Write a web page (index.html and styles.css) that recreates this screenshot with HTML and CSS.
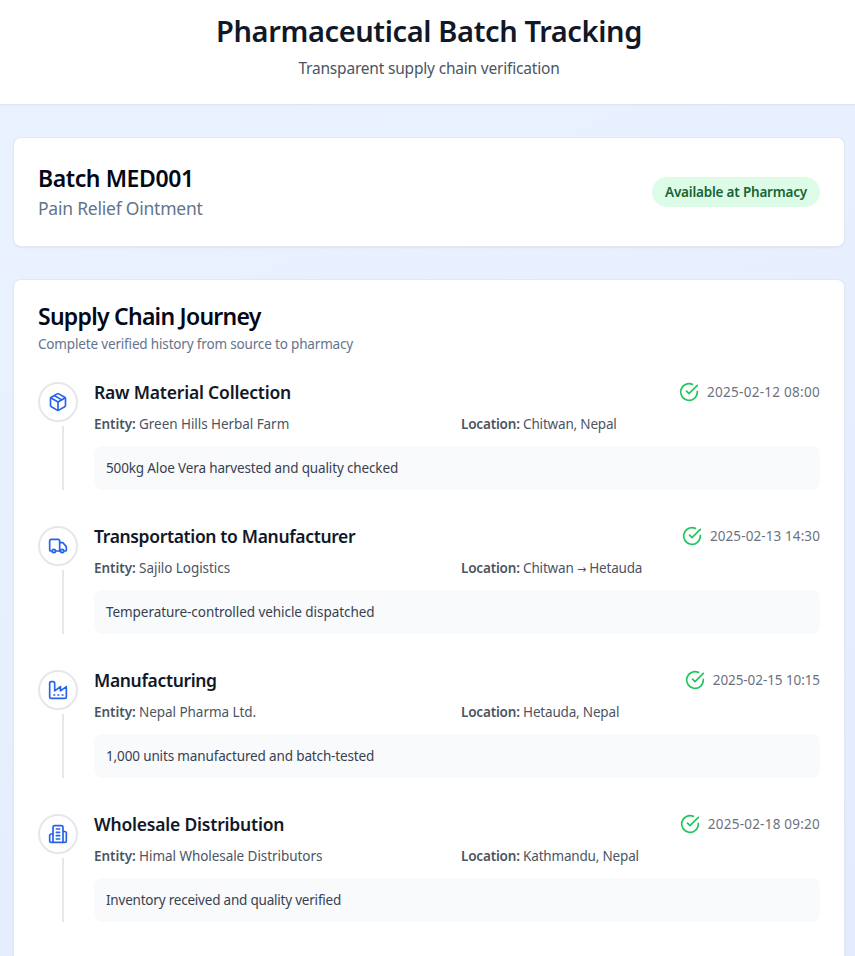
FILE: index.html
```html
<!DOCTYPE html>
<html lang="en">
<head>
<meta charset="utf-8">
<title>Pharmaceutical Batch Tracking</title>
<link rel="stylesheet" href="styles.css">
</head>
<body>
<svg class="sprite" aria-hidden="true">
  <symbol id="package" viewBox="0 0 24 24"><path d="m7.5 4.27 9 5.15"/><path d="M21 8a2 2 0 0 0-1-1.73l-7-4a2 2 0 0 0-2 0l-7 4A2 2 0 0 0 3 8v8a2 2 0 0 0 1 1.73l7 4a2 2 0 0 0 2 0l7-4A2 2 0 0 0 21 16Z"/><path d="m3.3 7 8.7 5 8.7-5"/><path d="M12 22V12"/></symbol>
  <symbol id="truck" viewBox="0 0 24 24"><path d="M14 18V6a2 2 0 0 0-2-2H4a2 2 0 0 0-2 2v11a1 1 0 0 0 1 1h2"/><path d="M15 18H9"/><path d="M19 18h2a1 1 0 0 0 1-1v-3.65a1 1 0 0 0-.22-.624l-3.48-4.35A1 1 0 0 0 17.52 8H14"/><circle cx="17" cy="18" r="2"/><circle cx="7" cy="18" r="2"/></symbol>
  <symbol id="factory" viewBox="0 0 24 24"><path d="M2 20a2 2 0 0 0 2 2h16a2 2 0 0 0 2-2V8l-7 5V8l-7 5V4a2 2 0 0 0-2-2H4a2 2 0 0 0-2 2Z"/><path d="M17 18h1"/><path d="M12 18h1"/><path d="M7 18h1"/></symbol>
  <symbol id="building" viewBox="0 0 24 24"><path d="M6 22V4a2 2 0 0 1 2-2h8a2 2 0 0 1 2 2v18Z"/><path d="M6 12H4a2 2 0 0 0-2 2v6a2 2 0 0 0 2 2h2"/><path d="M18 9h2a2 2 0 0 1 2 2v9a2 2 0 0 1-2 2h-2"/><path d="M10 6h4"/><path d="M10 10h4"/><path d="M10 14h4"/><path d="M10 18h4"/></symbol>
  <symbol id="check" viewBox="0 0 24 24"><path d="M22 11.08V12a10 10 0 1 1-5.93-9.14"/><path d="m9 11 3 3L22 4"/></symbol>
</svg>
<header class="header">
  <h1>Pharmaceutical Batch Tracking</h1>
  <p>Transparent supply chain verification</p>
</header>
<main class="main">
  <section class="card batch">
    <div>
      <h2 class="batch-title">Batch MED001</h2>
      <p class="batch-name">Pain Relief Ointment</p>
    </div>
    <span class="status">Available at Pharmacy</span>
  </section>
  <section class="card journey">
    <h2 class="journey-title">Supply Chain Journey</h2>
    <p class="journey-note">Complete verified history from source to pharmacy</p>
    <div class="steps">
      <article class="step">
        <div class="rail"><div class="dot"><svg><use href="#package"/></svg></div><div class="line"></div></div>
        <div class="body">
          <div class="top"><h3>Raw Material Collection</h3><div class="when"><svg><use href="#check"/></svg><time>2025-02-12 08:00</time></div></div>
          <div class="meta"><p><b>Entity:</b> Green Hills Herbal Farm</p><p><b>Location:</b> Chitwan, Nepal</p></div>
          <p class="detail">500kg Aloe Vera harvested and quality checked</p>
        </div>
      </article>
      <article class="step">
        <div class="rail"><div class="dot"><svg><use href="#truck"/></svg></div><div class="line"></div></div>
        <div class="body">
          <div class="top"><h3 class="long">Transportation to Manufacturer</h3><div class="when"><svg><use href="#check"/></svg><time class="snug">2025-02-13 14:30</time></div></div>
          <div class="meta"><p><b>Entity:</b> Sajilo Logistics</p><p><b>Location:</b> Chitwan <span class="arrow">→</span> Hetauda</p></div>
          <p class="detail wide">Temperature-controlled vehicle dispatched</p>
        </div>
      </article>
      <article class="step">
        <div class="rail"><div class="dot"><svg><use href="#factory"/></svg></div><div class="line"></div></div>
        <div class="body">
          <div class="top"><h3 class="long">Manufacturing</h3><div class="when"><svg><use href="#check"/></svg><time class="tight">2025-02-15 10:15</time></div></div>
          <div class="meta"><p><b>Entity:</b> Nepal Pharma Ltd.</p><p><b>Location:</b> Hetauda, Nepal</p></div>
          <p class="detail">1,000 units manufactured and batch-tested</p>
        </div>
      </article>
      <article class="step">
        <div class="rail"><div class="dot"><svg><use href="#building"/></svg></div><div class="line"></div></div>
        <div class="body">
          <div class="top"><h3>Wholesale Distribution</h3><div class="when"><svg><use href="#check"/></svg><time class="close">2025-02-18 09:20</time></div></div>
          <div class="meta"><p><b>Entity:</b> Himal Wholesale Distributors</p><p><b>Location:</b> Kathmandu, Nepal</p></div>
          <p class="detail narrow">Inventory received and quality verified</p>
        </div>
      </article>
    </div>
  </section>
</main>
</body>
</html>
```
FILE: styles.css
```css
* { box-sizing: border-box; margin: 0; }
html { height: 100%; overflow: hidden; }
body {
  height: 956px;
  overflow: hidden;
  font: 13.5px/20px "Noto Sans", sans-serif;
  color: #020817;
  background: linear-gradient(155deg, #ebf2ff, #e4ebfe);
}
svg { fill: none; stroke: currentColor; stroke-width: 2; stroke-linecap: round; stroke-linejoin: round; width: 20px; height: 20px; flex: none; display: block; }
.sprite { display: none; }
.header {
  height: 104px;
  padding: 13px 10px 0 13px;
  text-align: center;
  background: #fff;
  box-shadow: 0 1px 2px rgba(0, 0, 0, .07);
}
h1 { font-size: 29px; line-height: 36px; font-weight: 600; letter-spacing: -.38px; color: #111827; white-space: nowrap; }
.header p { margin-top: 7px; font-size: 15.5px; line-height: 25px; letter-spacing: -.19px; color: #4b5563; }
.main { padding: 33px 10px 0 13px; display: flex; flex-direction: column; gap: 32px; }
.card {
  padding: 24px;
  border: 1px solid #e2e8f0;
  border-radius: 8px;
  background: #fff;
  box-shadow: 0 1px 2px rgba(0, 0, 0, .05);
}
.batch { display: flex; align-items: center; justify-content: space-between; }
h2 { font-size: 23px; font-weight: 600; white-space: nowrap; }
.batch-title { line-height: 32px; letter-spacing: -.42px; }
.batch-name { font-size: 17.5px; line-height: 28px; letter-spacing: -.23px; color: #64748b; }
.status {
  width: 168px;
  padding: 5px 0;
  border-radius: 999px;
  text-align: center;
  font-weight: 600;
  letter-spacing: -.2px;
  color: #166534;
  background: #dcfce7;
}
.journey { height: 720px; }
.journey-title { line-height: 24px; letter-spacing: -.74px; }
.journey-note { margin-top: 6px; letter-spacing: -.165px; color: #64748b; }
.steps { margin-top: 24px; display: flex; flex-direction: column; gap: 32px; }
.step { display: flex; gap: 16px; height: 112px; }
.rail { width: 40px; padding-top: 4px; display: flex; flex-direction: column; gap: 4px; }
.dot { width: 40px; height: 40px; padding: 8px; border: 2px solid #e5e7eb; border-radius: 50%; color: #2563eb; }
.line { width: 2px; flex: 1; margin-left: 24px; background: #e5e7eb; }
.body { flex: 1; }
.top { display: flex; align-items: center; justify-content: space-between; height: 28px; }
h3 { font-size: 17.5px; line-height: 28px; font-weight: 600; letter-spacing: -.2px; color: #111827; }
h3.long { letter-spacing: -.35px; }
.when { display: flex; align-items: center; gap: 8px; color: #22c55e; }
time { color: #6b7280; letter-spacing: .28px; }
time.close { letter-spacing: .23px; }
time.snug { letter-spacing: .1px; }
time.tight { letter-spacing: -.08px; }
.meta { margin-top: 8px; display: grid; grid-template-columns: 1fr 1fr; gap: 8px; letter-spacing: -.06px; color: #4b5563; }
.meta p + p { letter-spacing: -.18px; }
.meta b { font-weight: 600; }
.arrow { display: inline-block; width: 9px; font: 11px/10px "DejaVu Sans", sans-serif; letter-spacing: 0; }
.detail { margin-top: 12px; padding: 12px; border-radius: 8px; letter-spacing: -.14px; color: #374151; background: #f9fafb; }
.detail.wide { letter-spacing: -.06px; }
.detail.narrow { letter-spacing: -.21px; }
```
